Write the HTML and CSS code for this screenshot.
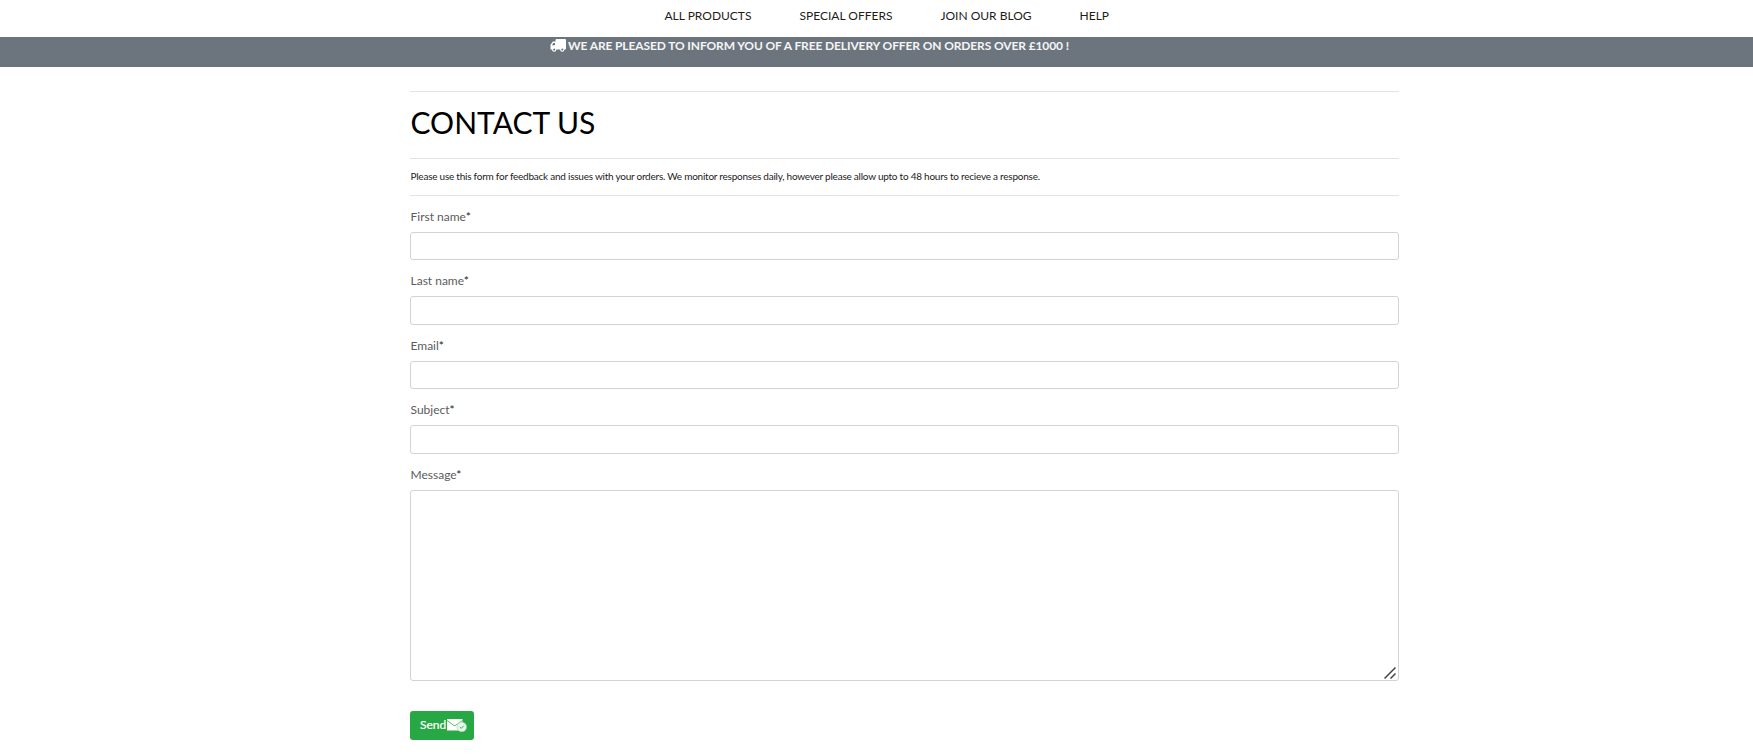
FILE: index.html
```html
<!DOCTYPE html>
<html lang="en">
<head>
<meta charset="utf-8">
<title>Contact us</title>
<link rel="stylesheet" href="styles.css">
</head>
<body>
<nav class="nav">
  <a class="nav-products">ALL PRODUCTS</a>
  <a class="nav-offers">SPECIAL OFFERS</a>
  <a class="nav-blog">JOIN OUR BLOG</a>
  <a class="nav-help">HELP</a>
</nav>
<div class="banner">
  <svg class="truck" viewBox="0 0 16 13"><path fill="#fff" fill-rule="evenodd" d="M6.500 0H15a1 1 0 0 1 1 1v8.500a1 1 0 0 1-1 1h-.5a2.200 2.200 0 0 1-4.400 0H6.400a2.200 2.200 0 0 1-4.400 0H.5V5.800L2.800 2.500h2.700V1a1 1 0 0 1 1-1zM3.300 4L2 6.200h3V4zM4.200 9.500a1 1 0 1 0 .01 0zM12.300 9.500a1 1 0 1 0 .01 0z"/></svg>
  <span class="banner-text">WE ARE PLEASED TO INFORM YOU OF A FREE DELIVERY OFFER ON ORDERS OVER £1000 !</span>
</div>
<main class="page">
  <h1 class="title"><span>CONTACT US</span></h1>
  <p class="intro"><span>Please use this form for feedback and issues with your orders. We monitor responses daily, however please allow upto to 48 hours to recieve a response.</span></p>
  <form class="form">
    <label class="label" for="first">First name<span class="star">*</span></label>
    <input class="field" id="first" type="text">
    <label class="label" for="last">Last name<span class="star">*</span></label>
    <input class="field tall" id="last" type="text">
    <label class="label" for="email">Email<span class="star">*</span></label>
    <input class="field" id="email" type="text">
    <label class="label" for="subject">Subject<span class="star">*</span></label>
    <input class="field tall" id="subject" type="text">
    <label class="label" for="message">Message<span class="star">*</span></label>
    <div class="message-wrap">
      <textarea class="message" id="message"></textarea>
      <svg class="grip" viewBox="0 0 12 12"><path d="M.5 11.500L11.500.5M6.500 11.500L11.500 6.500" stroke="#444" stroke-width="1.500" fill="none"/></svg>
    </div>
    <button class="send" type="button"><span>Send</span><svg class="mail" viewBox="0 0 20 14"><path fill="#fff" d="M0 1h15.500v11.500H0z"/><path d="M0 2.500l6.500 4.700q1.200.8 2.400 0L15.500 2.500" stroke="#28a745" stroke-width=".8" fill="none"/><circle cx="14.800" cy="9" r="4.800" fill="#e9f6ec" stroke="#8fd0a0" stroke-width=".5"/><path d="M12.800 9l1.500 1.400 2.500-2.700" stroke="#28a745" stroke-width=".9" fill="none"/></svg></button>
  </form>
</main>
</body>
</html>
```
FILE: styles.css
```css
* { box-sizing: border-box; }
body { margin: 0; background: #fff; color: #000; font-family: Lato, "Liberation Sans", sans-serif; }
.nav { height: 37px; padding: 7px 0 0 664.5px; display: flex; gap: 48px; font-size: 12px; line-height: 18px; color: #1c1c1c; white-space: nowrap; }
.banner { height: 30px; background: #6c757d; color: #f4f5f6; display: flex; padding: 0 0 0 550px; font-size: 12px; line-height: 17px; font-weight: 700; white-space: nowrap; }
.truck { width: 16px; height: 13px; margin: 2px 2px 0 0; }
.banner-text { letter-spacing: -0.12px; }
.page { width: 989px; margin: 24px 0 0 410px; }
.title { margin: 0; height: 68px; border-top: 1px solid #e3e3e3; border-bottom: 1px solid #e3e3e3; font-size: 30px; line-height: 36px; font-weight: 400; padding: 12px 0 0 0.5px; }
.intro { margin: 0; height: 37px; border-bottom: 1px solid #e3e3e3; font-size: 10px; line-height: 15px; padding: 10px 0 0 0.5px; letter-spacing: -0.24px; color: #1c1c1c; white-space: nowrap; }
.form { display: flex; flex-direction: column; align-items: flex-start; }
.label { height: 36px; padding: 12px 0 0 0.5px; font-size: 12px; line-height: 18px; color: #5c5c5c; }
.star { color: #222; }
.field { width: 100%; height: 28px; border: 1px solid #ced4da; border-radius: 3px; padding: 3px 8px; font: inherit; background: #fff; }
.tall { height: 29px; }
.message-wrap { position: relative; width: 100%; height: 191px; }
.message { display: block; width: 100%; height: 100%; border: 1px solid #ced4da; border-radius: 3px; padding: 4px 8px; resize: none; background: #fff; }
.grip { position: absolute; right: 3px; bottom: 2px; width: 12px; height: 12px; }
.send { margin-top: 30px; width: 64px; height: 29px; border: 0; border-radius: 3px; background: #28a745; color: #fff; padding: 0 0 2px 10px; display: flex; align-items: center; font: 400 12px/18px Lato, sans-serif; -webkit-text-stroke: 0.2px #fff; }
.mail { width: 20px; height: 14px; margin-left: 1px; flex: none; }
```
